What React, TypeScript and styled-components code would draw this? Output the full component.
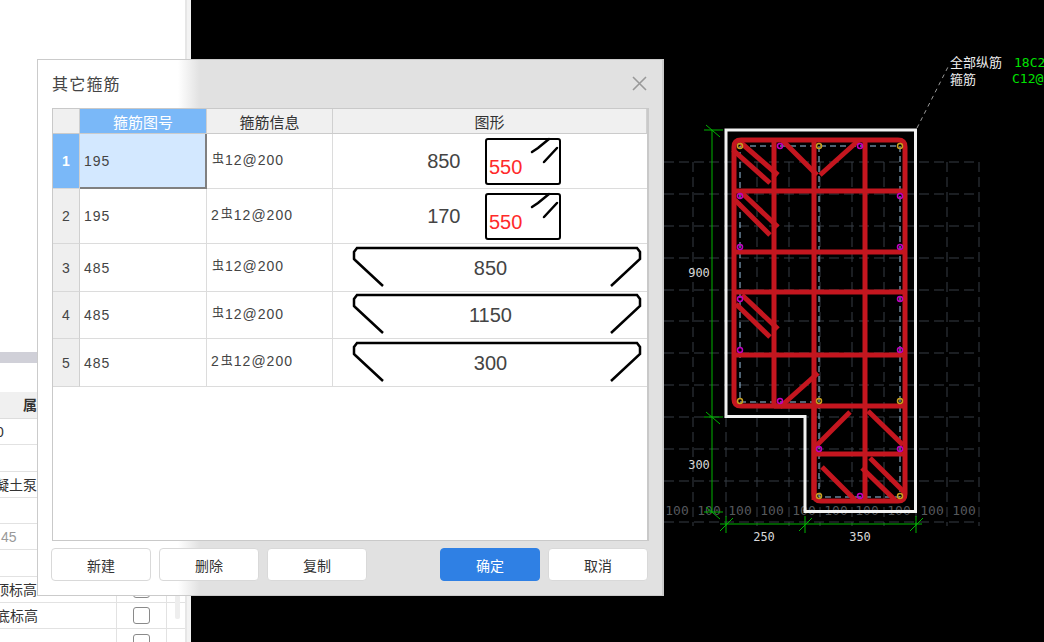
import { Fragment, memo } from "react";
import styled, { createGlobalStyle } from "styled-components";

const UI_FONT = `"Liberation Sans", "Noto Sans CJK SC", sans-serif`;
const CAD_FONT = `"DejaVu Sans Mono", "Noto Sans CJK SC", monospace`;

const GlobalStyle = createGlobalStyle`
  html, body {
    margin: 0;
    padding: 0;
    width: 100%;
    height: 100%;
    overflow: hidden;
    background: #000;
    font-family: ${UI_FONT};
  }
  #root {
    height: 100%;
  }
`;

const Page = styled.div`
  position: relative;
  display: flex;
  width: 1044px;
  height: 642px;
  overflow: hidden;
`;

/* left properties panel, mostly covered by the dialog */
const SidePanel = styled.div`
  width: 185px;
  flex-shrink: 0;
  display: flex;
  flex-direction: column;
  background: #fff;
  border-right: 2px solid #e6e6e6;
  overflow: hidden;
`;

const SideGutter = styled.div`
  width: 4px;
  flex-shrink: 0;
  background: #f3f3f3;
`;

const PanelBand = styled.div`
  flex-shrink: 0;
  margin-top: 352px;
  margin-bottom: 29px;
  height: 11px;
  background: #d0d0d8;
`;

const PropHeader = styled.div`
  flex-shrink: 0;
  height: 26px;
  background: #f0f0f0;
  border-bottom: 1px solid #ddd;
  font-size: 14px;
  font-weight: 700;
  color: #333;
  line-height: 26px;
  padding-left: 23px;
  white-space: nowrap;
`;

const PropRow = styled.div`
  flex-shrink: 0;
  display: grid;
  grid-template-columns: 117px 50px 1fr;
  height: 26.3px;
  box-sizing: border-box;
  border-bottom: 1px solid #e2e2e2;
`;

const PropName = styled.div<{ $offset: number; $muted?: boolean }>`
  overflow: hidden;
  white-space: nowrap;
  font-size: 14px;
  line-height: 26px;
  color: ${(p) => (p.$muted ? "#999" : "#333")};
  text-indent: ${(p) => p.$offset}px;
  border-right: 1px solid #e2e2e2;
`;

const PropCheck = styled.div`
  display: flex;
  align-items: center;
  justify-content: center;
  border-right: 1px solid #e2e2e2;
`;

const CheckBox = styled.span`
  width: 15px;
  height: 15px;
  border: 1px solid #8a8a8a;
  border-radius: 3px;
  background: #fff;
`;

const PanelScroll = styled.div`
  position: absolute;
  left: 175px;
  top: 595px;
  width: 5px;
  height: 24px;
  border-radius: 2px;
  background: #eee;
`;

const Canvas = styled.div`
  flex: 1;
  background: #000;
`;

const CadSvg = styled.svg`
  display: block;
`;

const CadText = styled.text<{ $color: string; $size: number }>`
  font-family: ${CAD_FONT};
  font-size: ${(p) => p.$size}px;
  fill: ${(p) => p.$color};
`;

/* dialog */
const Dialog = styled.div`
  position: absolute;
  left: 37px;
  top: 59px;
  width: 627px;
  height: 537px;
  box-sizing: border-box;
  padding: 0 14px 14px 14px;
  display: flex;
  flex-direction: column;
  border: 1px solid #cbcbcb;
  border-right-width: 2px;
  background: linear-gradient(90deg, #fff 0, #fff 140px, #e1e1e1 162px);
`;

const DialogHead = styled.div`
  height: 48px;
  flex-shrink: 0;
  display: flex;
  align-items: center;
  justify-content: space-between;
`;

const DialogTitle = styled.div`
  font-size: 16px;
  letter-spacing: 1.2px;
  color: #444;
  margin-top: -2px;
`;

const CloseIcon = styled.svg`
  width: 15px;
  height: 15px;
  margin: -2px 1px 0 0;
`;

const TableBox = styled.div`
  width: 597px;
  height: 433px;
  flex-shrink: 0;
  box-sizing: border-box;
  border: 1px solid #c9c9c9;
  border-right-width: 2px;
  background: #fff;
  display: grid;
  grid-template-columns: 27px 127px 126px 1fr;
  grid-template-rows: 25px 55px 55px 48px 47px 48px;
  align-content: start;
`;

const HeadCell = styled.div<{ $active?: boolean }>`
  display: flex;
  align-items: center;
  justify-content: center;
  font-size: 15px;
  box-sizing: border-box;
  color: ${(p) => (p.$active ? "#fff" : "#333")};
  background: ${(p) => (p.$active ? "#7ab8f8" : "#f0f0f0")};
  border-right: 1px solid #d0d0d0;
  border-bottom: 1px solid #cbcbcb;
`;

const RowHead = styled.div<{ $active?: boolean }>`
  display: flex;
  align-items: center;
  justify-content: center;
  box-sizing: border-box;
  font-size: 14px;
  font-weight: ${(p) => (p.$active ? 700 : 400)};
  color: ${(p) => (p.$active ? "#fff" : "#444")};
  background: ${(p) => (p.$active ? "#7ab8f8" : "#efefef")};
  border-right: 1px solid #d0d0d0;
  border-bottom: 1px solid #d8d8d8;
`;

const DataCell = styled.div<{ $selected?: boolean; $info?: boolean }>`
  display: flex;
  align-items: center;
  box-sizing: border-box;
  padding-left: 4px;
  padding-bottom: ${(p) => (p.$info ? 3 : 0)}px;
  font-size: 14px;
  letter-spacing: 1px;
  color: #444;
  background: ${(p) => (p.$selected ? "#d3e8ff" : "#fff")};
  border-right: ${(p) => (p.$selected ? "2px solid #808080" : "1px solid #dcdcdc")};
  border-bottom: ${(p) => (p.$selected ? "2px solid #808080" : "1px solid #dcdcdc")};
`;

const RebarMark = styled.span`
  font-size: 12px;
  margin: -4px 1px 0 1px;
  letter-spacing: 0;
`;

const ShapeCell = styled.div`
  position: relative;
  display: flex;
  align-items: center;
  justify-content: center;
  box-sizing: border-box;
  border-bottom: 1px solid #dcdcdc;
`;

const StirrupLength = styled.span`
  width: 36px;
  margin: 1px 24px 0 6px;
  text-align: right;
  font-size: 20px;
  color: #444;
`;

const HookLength = styled.span`
  position: absolute;
  left: 0;
  right: 0;
  top: 50%;
  transform: translateY(-50%);
  margin-left: 1px;
  text-align: center;
  font-size: 20px;
  color: #444;
`;

const ShapeSvg = styled.svg<{ $hook?: boolean }>`
  display: block;
  flex-shrink: 0;
  margin-left: ${(p) => (p.$hook ? 13 : 0)}px;
  margin-top: ${(p) => (p.$hook ? -2 : 1)}px;
`;

const ShapeLabel = styled.text`
  font-family: ${UI_FONT};
  font-size: 20px;
  fill: #ff2a2a;
`;

const DialogFoot = styled.div`
  display: flex;
  align-items: center;
  gap: 8px;
  margin: 7px 0 0 -1px;
`;

const FootButton = styled.button<{ $primary?: boolean }>`
  width: 100px;
  height: 33px;
  padding: 0;
  font-family: ${UI_FONT};
  font-size: 14px;
  border-radius: 4px;
  color: ${(p) => (p.$primary ? "#fff" : "#333")};
  background: ${(p) => (p.$primary ? "#2f80e4" : "#fff")};
  border: 1px solid ${(p) => (p.$primary ? "#2f80e4" : "#d9d9d9")};
`;

const FootGap = styled.div`
  flex: 1;
`;

const StirrupShape = () => (
  <ShapeSvg width="77" height="49" viewBox="0 0 77 49">
    <rect x="1" y="2" width="74" height="45" rx="2" fill="#fff" stroke="#000" strokeWidth="2" />
    <path d="M47 15 L53 11 L64 2 M59 25 L72 11" fill="none" stroke="#000" strokeWidth="2.5" strokeLinecap="round" />
    <ShapeLabel x="4" y="37">550</ShapeLabel>
  </ShapeSvg>
);

const HookShape = () => (
  <ShapeSvg $hook width="290" height="42" viewBox="0 0 290 42">
    <path
      d="M31 40 L3 14 L2 13 L2 6 L5 2 L285 2 L288 6 L288 13 L259 40"
      fill="none"
      stroke="#000"
      strokeWidth="2.5"
    />
  </ShapeSvg>
);

const rows = [
  { no: 1, code: "195", count: "", len: "850", kind: "stirrup" },
  { no: 2, code: "195", count: "2", len: "170", kind: "stirrup" },
  { no: 3, code: "485", count: "", len: "850", kind: "hook" },
  { no: 4, code: "485", count: "", len: "1150", kind: "hook" },
  { no: 5, code: "485", count: "2", len: "300", kind: "hook" },
];

const props = [
  { name: "0", offset: -4 },
  { name: "", offset: 0 },
  { name: "混凝土泵", offset: -19 },
  { name: "", offset: 0 },
  { name: "45", offset: 1, muted: true },
  { name: "", offset: 0 },
  { name: "顶标高", offset: -5, check: true },
  { name: "底标高", offset: -4, check: true },
  { name: "", offset: 0, check: true },
];

// drawing coordinates are page pixels, the viewBox starts where the canvas starts
const gridY = [162, 194, 226, 258, 290, 321, 353, 385, 417, 449, 481, 522];
const gridX = [693, 726, 757, 789, 820, 852, 884, 916, 947, 979];
const hundredX = [677, 709, 740, 772, 804, 836, 867, 899, 932, 964];

const rebarLines = [
  "M774 140V406",
  "M814 140V500",
  "M865 140V500",
  "M734 191H905",
  "M734 252H905",
  "M734 292H905",
  "M734 355H905",
  "M814 454H905",
  "M740 142L778 175",
  "M733 150L770 183",
  "M742 193L778 227",
  "M735 200L770 235",
  "M782 140L817 175",
  "M820 175L859 140",
  "M742 295L778 329",
  "M736 304L770 337",
  "M780 407L818 373",
  "M815 447L850 412",
  "M868 411L903 445",
  "M822 467L855 500",
  "M870 458L905 493",
  "M862 468L895 500",
];

const yellowDots = [
  [740, 146], [819, 146], [900, 146], [740, 401], [819, 401], [900, 401], [819, 496], [900, 496],
];
const magentaDots = [
  [780, 146], [860, 146], [740, 196], [900, 196], [740, 247], [900, 247], [740, 299], [900, 299],
  [740, 350], [900, 350], [780, 401], [819, 449], [900, 449], [860, 496],
];

const dimTicksV = [130, 417, 512];
const dimTicksH = [726, 805, 916];

const CadDrawing = () => (
  <CadSvg width="853" height="642" viewBox="191 0 853 642">
    <g stroke="#363d45" strokeWidth="1" strokeDasharray="10 5" fill="none">
      {gridY.map((y) => (
        <path key={y} d={`M664 ${y}H979`} />
      ))}
      {gridX.map((x) => (
        <path key={x} d={`M${x} 162V526`} />
      ))}
    </g>
    {hundredX.map((x) => (
      <CadText key={x} x={x} y={515} textAnchor="middle" $color="#55585c" $size={13}>
        100
      </CadText>
    ))}

    <path
      d="M740 146H900V497H819V402H740Z M819 146V402"
      fill="none"
      stroke="#9cc4e4"
      strokeWidth="1"
      strokeDasharray="6 4"
    />

    <g fill="none" stroke="#c4161f" strokeWidth="5">
      <path d="M741 140H898Q905 140 905 147V494Q905 501 898 501H821Q814 501 814 494V406H741Q734 406 734 399V147Q734 140 741 140Z" />
      <path d="M774 406H905" />
      {rebarLines.map((d) => (
        <path key={d} d={d} />
      ))}
    </g>

    {yellowDots.map(([x, y]) => (
      <circle key={`${x}-${y}`} cx={x} cy={y} r="2.5" fill="none" stroke="#c8a020" strokeWidth="1.5" />
    ))}
    {magentaDots.map(([x, y]) => (
      <circle key={`${x}-${y}`} cx={x} cy={y} r="2.5" fill="none" stroke="#c000c0" strokeWidth="1.5" />
    ))}

    <path d="M726 130H915.5V511.5H805V416.5H726Z" fill="none" stroke="#f2f2f2" strokeWidth="3" />

    <g stroke="#00b400" strokeWidth="1" fill="none">
      <path d="M712 130V512" />
      {dimTicksV.map((y) => (
        <path key={y} d={`M704 ${y}H723 M706 ${y - 5}L720 ${y + 7}`} />
      ))}
      <path d="M720 524H922" />
      {dimTicksH.map((x) => (
        <path key={x} d={`M${x} 516V533 M${x - 6} 531L${x + 7} 518`} />
      ))}
    </g>

    <CadText x={699} y={277} textAnchor="middle" $color="#d8d8d8" $size={12}>900</CadText>
    <CadText x={699} y={469} textAnchor="middle" $color="#d8d8d8" $size={12}>300</CadText>
    <CadText x={764} y={541} textAnchor="middle" $color="#d8d8d8" $size={12}>250</CadText>
    <CadText x={860} y={541} textAnchor="middle" $color="#d8d8d8" $size={12}>350</CadText>

    <path d="M917 128L948 67" stroke="#999" strokeWidth="1" strokeDasharray="4 4" fill="none" />
    <CadText x={950} y={67} $color="#eee" $size={13}>全部纵筋</CadText>
    <CadText x={950} y={84} $color="#eee" $size={13}>箍筋</CadText>
    <CadText x={1014} y={67} $color="#00e000" $size={13}>18C22</CadText>
    <CadText x={1012} y={83} $color="#00e000" $size={13}>C12@200</CadText>
  </CadSvg>
);

export const App = () => {
  return (
    <Page>
      <GlobalStyle />
      <SidePanel>
        <PanelBand />
        <PropHeader>属性名称</PropHeader>
        {props.map((prop, index) => (
          <PropRow key={index}>
            <PropName $offset={prop.offset} $muted={prop.muted}>
              {prop.name}
            </PropName>
            <PropCheck>{prop.check && <CheckBox />}</PropCheck>
          </PropRow>
        ))}
      </SidePanel>
      <SideGutter />
      <PanelScroll />
      <Canvas>
        <CadDrawing />
      </Canvas>

      <Dialog>
        <DialogHead>
          <DialogTitle>其它箍筋</DialogTitle>
          <CloseIcon viewBox="0 0 15 15">
            <path d="M1 1L14 14M14 1L1 14" stroke="#999" strokeWidth="1.6" fill="none" />
          </CloseIcon>
        </DialogHead>
        <TableBox>
          <HeadCell />
          <HeadCell $active>箍筋图号</HeadCell>
          <HeadCell>箍筋信息</HeadCell>
          <HeadCell>图形</HeadCell>
          {rows.map((row) => (
            <Fragment key={row.no}>
              <RowHead $active={row.no === 1}>{row.no}</RowHead>
              <DataCell $selected={row.no === 1}>{row.code}</DataCell>
              <DataCell $info>
                {row.count}
                <RebarMark>虫</RebarMark>12@200
              </DataCell>
              <ShapeCell>
                {row.kind === "stirrup" ? (
                  <>
                    <StirrupLength>{row.len}</StirrupLength>
                    <StirrupShape />
                  </>
                ) : (
                  <>
                    <HookShape />
                    <HookLength>{row.len}</HookLength>
                  </>
                )}
              </ShapeCell>
            </Fragment>
          ))}
        </TableBox>
        <DialogFoot>
          <FootButton>新建</FootButton>
          <FootButton>删除</FootButton>
          <FootButton>复制</FootButton>
          <FootGap />
          <FootButton $primary>确定</FootButton>
          <FootButton>取消</FootButton>
        </DialogFoot>
      </Dialog>
    </Page>
  );
};

export default memo(App);
